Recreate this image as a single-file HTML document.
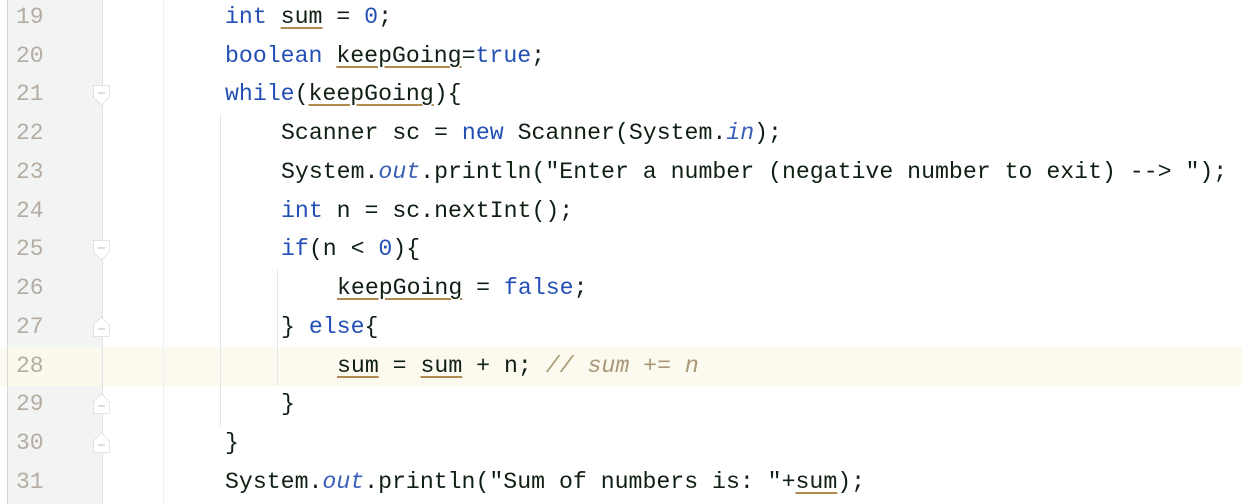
<!DOCTYPE html>
<html><head><meta charset="utf-8"><style>
html,body{margin:0;padding:0;background:#fff;width:1242px;height:504px;overflow:hidden;position:relative}
.g{position:absolute;left:7px;top:0;width:94px;height:504px;background:#f2f3f3;border-left:1px solid #d8d8d8;border-right:1px solid #e2e2e2}
.hl{position:absolute;left:0;top:347px;width:1242px;height:39px;background:#fcfaee}
.hlg{position:absolute;left:8px;top:347px;width:93px;height:39px;background:#fbf9ec}
.ln{position:absolute;left:16px;font:23px "Liberation Mono",monospace;color:#b5aca2;line-height:39px}
.c{position:absolute;font:23.2px "Liberation Mono",monospace;color:#0f1f12;line-height:39px;white-space:pre}
.k{color:#2450b5}.n{color:#2450b5}.f{color:#3a5fb8;font-style:italic}
.cm{color:#a89878;font-style:italic}
.u{text-decoration:underline;text-decoration-color:#b08a50;text-underline-offset:4px}
.v{position:absolute;width:1px;background:#e6e6e6}
.fold{position:absolute;left:92px}
</style></head><body>
<div class="hl"></div>
<div class="g"></div>
<div class="hlg"></div>
<div class="v" style="left:163px;top:0;height:504px;background:#efefef"></div>
<div class="v" style="left:220px;top:114px;height:312px"></div>
<div class="v" style="left:277px;top:270px;height:116px"></div>
<svg class="fold" style="top:84px" width="20" height="24"><path d="M1.5 1.5H17.5V13L9.5 21L1.5 13Z" fill="#fff" stroke="#ccc" stroke-dasharray="1 1"/><path d="M6 9H13" stroke="#bbb"/></svg>
<svg class="fold" style="top:239px" width="20" height="24"><path d="M1.5 1.5H17.5V13L9.5 21L1.5 13Z" fill="#fff" stroke="#ccc" stroke-dasharray="1 1"/><path d="M6 9H13" stroke="#bbb"/></svg>
<svg class="fold" style="top:314px" width="20" height="24"><path d="M1.5 22.5H17.5V11L9.5 3L1.5 11Z" fill="#fff" stroke="#ccc" stroke-dasharray="1 1"/><path d="M6 15H13" stroke="#bbb"/></svg>
<svg class="fold" style="top:391px" width="20" height="24"><path d="M1.5 22.5H17.5V11L9.5 3L1.5 11Z" fill="#fff" stroke="#ccc" stroke-dasharray="1 1"/><path d="M6 15H13" stroke="#bbb"/></svg>
<svg class="fold" style="top:430px" width="20" height="24"><path d="M1.5 22.5H17.5V11L9.5 3L1.5 11Z" fill="#fff" stroke="#ccc" stroke-dasharray="1 1"/><path d="M6 15H13" stroke="#bbb"/></svg>
<div class="ln" style="top:-2px">19</div>
<div class="ln" style="top:37px">20</div>
<div class="ln" style="top:75px">21</div>
<div class="ln" style="top:114px">22</div>
<div class="ln" style="top:153px">23</div>
<div class="ln" style="top:192px">24</div>
<div class="ln" style="top:230px">25</div>
<div class="ln" style="top:269px">26</div>
<div class="ln" style="top:308px">27</div>
<div class="ln" style="top:347px">28</div>
<div class="ln" style="top:385px">29</div>
<div class="ln" style="top:424px">30</div>
<div class="ln" style="top:463px">31</div>
<div class="c" style="left:225px;top:-2px"><span class="k">int</span> <span class="u">sum</span> = <span class="n">0</span>;</div>
<div class="c" style="left:225px;top:37px"><span class="k">boolean</span> <span class="u">keepGoing</span>=<span class="k">true</span>;</div>
<div class="c" style="left:225px;top:75px"><span class="k">while</span>(<span class="u">keepGoing</span>){</div>
<div class="c" style="left:281px;top:114px">Scanner sc = <span class="k">new</span> Scanner(System.<span class="f">in</span>);</div>
<div class="c" style="left:281px;top:153px">System.<span class="f">out</span>.println("Enter a number (negative number to exit) --> ");</div>
<div class="c" style="left:281px;top:192px"><span class="k">int</span> n = sc.nextInt();</div>
<div class="c" style="left:281px;top:230px"><span class="k">if</span>(n &lt; <span class="n">0</span>){</div>
<div class="c" style="left:337px;top:269px"><span class="u">keepGoing</span> = <span class="k">false</span>;</div>
<div class="c" style="left:281px;top:308px">} <span class="k">else</span>{</div>
<div class="c" style="left:337px;top:347px"><span class="u">sum</span> = <span class="u">sum</span> + n; <span class="cm">// sum += n</span></div>
<div class="c" style="left:281px;top:385px">}</div>
<div class="c" style="left:225px;top:424px">}</div>
<div class="c" style="left:225px;top:463px">System.<span class="f">out</span>.println("Sum of numbers is: "+<span class="u">sum</span>);</div>
</body></html>
